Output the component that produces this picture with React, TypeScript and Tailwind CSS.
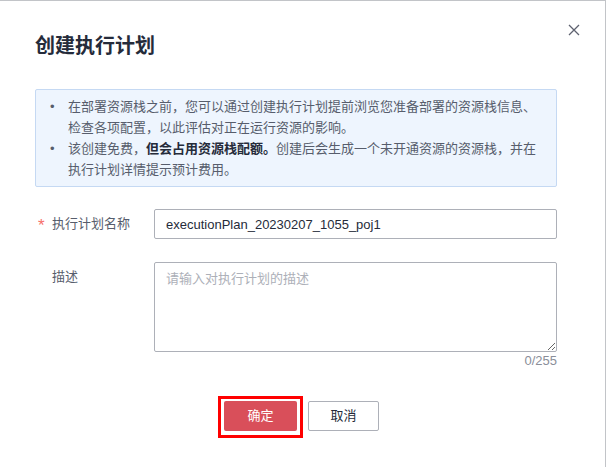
import { useState } from 'react';

const font = { fontFamily: '"Liberation Sans", "Noto Sans CJK SC", sans-serif' };

export default function App() {
  const [name, setName] = useState('executionPlan_20230207_1055_poj1');
  const [desc, setDesc] = useState('');

  return (
    <div style={font} className="w-[606px] h-[467px] bg-white border-t border-r border-[#c2c4c8] relative text-[#252b3a]">
      <button className="absolute right-[25px] top-[23px] w-[12px] h-[12px] text-[#5e6270]">
        <svg viewBox="0 0 12 12" width="12" height="12" fill="none" stroke="currentColor" strokeWidth="1.3">
          <path d="M1 1L11 11M11 1L1 11" />
        </svg>
      </button>

      <div className="pl-[35px] pr-[48px] pt-[31px]">
        <h1 className="text-[20px] leading-[28px] font-bold">创建执行计划</h1>

        <div className="mt-[29px] rounded-[2px] border border-[#c5d9f3] bg-[#eef5fe] pl-[12px] pr-[10px] py-[6px] text-[13px] leading-[21px] text-[#575d6c]">
          <ul>
            <li className="flex">
              <span className="w-[20px] shrink-0 pl-[2px]">•</span>
              <span>在部署资源栈之前，您可以通过创建执行计划提前浏览您准备部署的资源栈信息、检查各项配置，以此评估对正在运行资源的影响。</span>
            </li>
            <li className="flex">
              <span className="w-[20px] shrink-0 pl-[2px]">•</span>
              <p>
                该创建免费，<b className="font-bold text-[#252b3a]">但会占用资源栈配额。</b>创建后会生成一个未开通资源的资源栈，并在执行计划详情提示预计费用。
              </p>
            </li>
          </ul>
        </div>

        <div className="mt-[22px] flex items-center">
          <label className="w-[119px] shrink-0 flex items-center text-[13px] text-[#575d6c]">
            <span className="w-[17px] pl-[3px] pt-[3px] text-[#f66f6a] text-[17px] leading-[16px]">*</span>
            执行计划名称
          </label>
          <input
            value={name}
            onChange={(e) => setName(e.target.value)}
            className="flex-1 h-[30px] rounded-[2px] border border-[#adb0b8] px-[11px] text-[13px] text-[#252b3a] outline-none"
          />
        </div>

        <div className="mt-[23px] flex items-start">
          <label className="w-[119px] shrink-0 pl-[17px] pt-[5px] text-[13px] text-[#575d6c]">描述</label>
          <div className="flex-1">
            <textarea
              value={desc}
              onChange={(e) => setDesc(e.target.value)}
              placeholder="请输入对执行计划的描述"
              className="block w-full h-[90px] rounded-[2px] border border-[#adb0b8] px-[11px] py-[6px] text-[13px] leading-[20px] placeholder:text-[#adb0b8] outline-none"
            />
            <div className="text-right text-[13px] leading-[16px] mt-[1px] text-[#8a8e99]">0/255</div>
          </div>
        </div>

        <div className="mt-[27px] flex justify-center items-start gap-[5px] pl-[5px]">
          <div className="border-[3px] border-[#ff0000] px-[3px] pt-[2px] pb-[4px]">
            <button className="block w-[73px] h-[30px] rounded-[2px] bg-[#d94f5a] text-white text-[13px]">确定</button>
          </div>
          <button className="mt-[5px] w-[71px] h-[30px] rounded-[2px] border border-[#adb0b8] bg-white text-[13px] text-[#252b3a]">
            取消
          </button>
        </div>
      </div>
    </div>
  );
}
